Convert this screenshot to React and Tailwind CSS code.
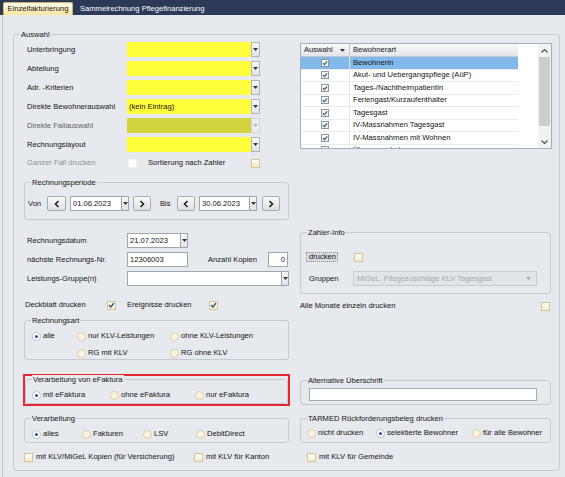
import React from "react";
import clsx from "clsx";

const Tri = ({ color = "#333" }) => (
  <svg width="5" height="3" viewBox="0 0 5 3">
    <path d="M0 0h5L2.5 3z" fill={color} />
  </svg>
);

const Group = ({ title, className, children }) => (
  <div className={clsx("relative rounded-[3px] border border-[#c5cad2]", className)}>
    <span className="absolute -top-[5px] left-[6px] bg-[#e6e9ee] px-[1px] leading-[9px]">
      {title}
    </span>
    {children}
  </div>
);

const Combo = ({ className, fill = "bg-white", value, disabled }) => (
  <div className={clsx("flex h-[15px]", className)}>
    <div className={clsx("flex flex-1 items-center px-[2px]", fill)}>{value}</div>
    <div
      className={clsx(
        "flex w-[9px] items-center justify-center border",
        disabled
          ? "border-[#d0d3d8] bg-[#eceef1]"
          : "border-[#b1b6be] bg-linear-to-b from-[#f7f8f9] to-[#e1e3e7]"
      )}
    >
      <Tri color={disabled ? "#b5b8bd" : "#333"} />
    </div>
  </div>
);

const DateCombo = ({ className, value }) => (
  <div className={clsx("flex h-[15px]", className)}>
    <div className="flex flex-1 items-center border border-r-0 border-[#a0a6ae] bg-white px-[2px]">
      {value}
    </div>
    <div className="flex w-[8px] items-center justify-center border border-[#a0a6ae] bg-linear-to-b from-[#f7f8f9] to-[#e1e3e7]">
      <Tri />
    </div>
  </div>
);

const Input = ({ className, children }) => (
  <div className={clsx("flex h-[15px] items-center border border-[#a0a6ae] bg-white px-[2px]", className)}>
    {children}
  </div>
);

const NavBtn = ({ className, right }) => (
  <div
    className={clsx(
      "flex h-[15px] items-center justify-center rounded-[2px] border border-[#a6abb3] bg-linear-to-b from-[#fbfbfb] to-[#dcdfe3]",
      className
    )}
  >
    <svg width="6" height="8" viewBox="0 0 6 8">
      <path
        d={right ? "M1.5 1l3 3-3 3" : "M4.5 1l-3 3 3 3"}
        fill="none"
        stroke="#1e1e1e"
        strokeWidth="1.6"
      />
    </svg>
  </div>
);

const CheckMark = ({ color = "#2a4d8f" }) => (
  <svg width="7" height="6" viewBox="0 0 7 6">
    <path d="M1 3l1.8 2L6 1" fill="none" stroke={color} strokeWidth="1.3" />
  </svg>
);

const Check = ({ checked }) => (
  <div className="flex h-[9px] w-[9px] shrink-0 items-center justify-center border border-[#dcc58d] bg-linear-to-b from-[#fefdf8] to-[#f3ebd2]">
    {checked && <CheckMark />}
  </div>
);

const Radio = ({ checked, label, className }) => (
  <div className={clsx("flex items-center", className)}>
    <div
      className={clsx(
        "flex h-[9px] w-[9px] shrink-0 items-center justify-center rounded-full border",
        checked ? "border-[#b9c1cc] bg-white" : "border-[#dfce96] bg-[#f8f3e2]"
      )}
    >
      {checked && <div className="h-[3px] w-[3px] rounded-full bg-[#1f4e9c]" />}
    </div>
    <span className="ml-[2px]">{label}</span>
  </div>
);

const yellowRows = [
  { label: "Unterbringung" },
  { label: "Abteilung" },
  { label: "Adr. -Kriterien" },
  { label: "Direkte Bewohnerauswahl", value: "(kein Eintrag)" },
  { label: "Direkte Fallauswahl", disabled: true },
  { label: "Rechnungslayout" },
];

const bewohnerarten = [
  "BewohnerIn",
  "Akut- und Uebergangspflege (AüP)",
  "Tages-/NachtheimpatientIn",
  "Feriengast/Kurzaufenthalter",
  "Tagesgast",
  "IV-Massnahmen Tagesgast",
  "IV-Massnahmen mit Wohnen",
  "Übergangsbetreuung",
];

const LeftColumn = () => (
  <div className="flex w-[286px] flex-col">
    <div className="mt-[7px] flex flex-col gap-[4px]">
      {yellowRows.map((r) => (
        <div key={r.label} className="flex h-[15px] items-center">
          <span className={clsx("w-[113px] pl-[13px]", r.disabled && "text-[#5c6068]")}>
            {r.label}
          </span>
          <Combo
            className="w-[133px]"
            fill={r.disabled ? "bg-[#d3d43d]" : "bg-[#ffff3b]"}
            value={r.value}
            disabled={r.disabled}
          />
        </div>
      ))}
    </div>

    <div className="mt-[6px] flex h-[10px] items-center">
      <span className="w-[114px] pl-[13px] text-[#8d929a]">Ganzer Fall drucken</span>
      <div className="h-[9px] w-[9px] border border-[#f1f2f4] bg-white" />
      <span className="ml-[11px] w-[103px]">Sortierung nach Zahler</span>
      <Check />
    </div>

    <Group title="Rechnungsperiode" className="ml-[10px] mt-[14px] h-[38px] w-[265px]">
      <div className="flex items-center pl-[3px] pt-[13px]">
        <span className="w-[19px]">Von</span>
        <NavBtn className="w-[19px]" />
        <DateCombo className="ml-[4px] w-[59px]" value="01.06.2023" />
        <NavBtn className="ml-[4px] w-[18px]" right />
        <span className="ml-[9px] w-[17px]">Bis</span>
        <NavBtn className="w-[18px]" />
        <DateCombo className="ml-[4px] w-[58px]" value="30.06.2023" />
        <NavBtn className="ml-[5px] w-[18px]" right />
      </div>
    </Group>

    <div className="mt-[13px] flex flex-col gap-[4px]">
      <div className="flex h-[15px] items-center">
        <span className="w-[113px] pl-[13px]">Rechnungsdatum</span>
        <DateCombo className="w-[61px]" value="21.07.2023" />
      </div>
      <div className="flex h-[15px] items-center">
        <span className="w-[113px] pl-[13px]">nächste Rechnungs-Nr.</span>
        <Input className="w-[61px]">12306003</Input>
        <span className="ml-[20px] w-[60px]">Anzahl Kopien</span>
        <Input className="w-[20px] justify-end">0</Input>
      </div>
      <div className="flex h-[15px] items-center">
        <span className="w-[113px] pl-[13px]">Leistungs-Gruppe(n)</span>
        <div className="flex h-[15px] w-[162px]">
          <div className="flex-1 border border-r-0 border-[#a0a6ae] bg-white" />
          <div className="flex w-[8px] items-center justify-center border border-[#a0a6ae] bg-linear-to-b from-[#f7f8f9] to-[#e1e3e7]">
            <Tri />
          </div>
        </div>
      </div>
    </div>

    <div className="mt-[14px] flex h-[10px] items-center pl-[11px]">
      <span className="w-[82px]">Deckblatt drucken</span>
      <Check checked />
      <span className="ml-[11px] w-[82px]">Ereignisse drucken</span>
      <Check checked />
    </div>

    <Group title="Rechnungsart" className="ml-[10px] mt-[10px] h-[40px] w-[265px]">
      <div className="pl-[7px] pt-[10px]">
        <div className="flex h-[10px] items-center">
          <Radio className="w-[45px]" checked label="alle" />
          <Radio className="w-[93px]" label="nur KLV-Leistungen" />
          <Radio label="ohne KLV-Leistungen" />
        </div>
        <div className="mt-[7px] flex h-[10px] items-center pl-[45px]">
          <Radio className="w-[93px]" label="RG mit KLV" />
          <Radio label="RG ohne KLV" />
        </div>
      </div>
    </Group>

    <div className="ml-[9px] mt-[14px] h-[32px] w-[267px] border-2 border-[#e8282d]">
      <Group title="Verarbeitung von eFaktura" className="mt-[3px] h-[25px] w-[263px]">
        <div className="mt-[10px] flex h-[10px] items-center pl-[6px]">
          <Radio className="w-[78px]" checked label="mit eFaktura" />
          <Radio className="w-[85px]" label="ohne eFaktura" />
          <Radio label="nur eFaktura" />
        </div>
      </Group>
    </div>

    <Group title="Verarbeitung" className="ml-[10px] mt-[12px] h-[25px] w-[265px]">
      <div className="mt-[10px] flex h-[10px] items-center pl-[7px]">
        <Radio className="w-[50px]" checked label="alles" />
        <Radio className="w-[61px]" label="Fakturen" />
        <Radio className="w-[53px]" label="LSV" />
        <Radio label="DebitDirect" />
      </div>
    </Group>
  </div>
);

const Chevron = ({ down }) => (
  <svg width="7" height="4" viewBox="0 0 7 4">
    <path
      d={down ? "M0.5 0.5L3.5 3.5L6.5 0.5" : "M0.5 3.5L3.5 0.5L6.5 3.5"}
      fill="none"
      stroke="#555"
      strokeWidth="1.2"
    />
  </svg>
);

const RightColumn = () => (
  <div className="flex w-[252px] flex-col">
    <div className="mt-[8px] flex h-[106px] w-[252px] overflow-hidden border border-[#a7adb6] bg-white">
      <div className="w-[217px]">
        <div className="flex h-[13px] border-b border-[#c3c7ce] bg-linear-to-b from-[#fafafa] to-[#e2e4e8]">
          <div className="flex w-[49px] items-center border-r border-[#c3c7ce] pl-[3px]">
            Auswahl
            <span className="ml-[7px] flex">
              <Tri />
            </span>
          </div>
          <div className="flex items-center pl-[3px]">Bewohnerart</div>
        </div>
        {bewohnerarten.map((b, i) => (
          <div
            key={b}
            className={clsx(
              "flex h-[12.5px] border-b border-[#ebebeb]",
              i === 0 && "bg-[#80b9ea]"
            )}
          >
            <div className="flex w-[49px] items-center justify-center border-r border-[#e4e4e4]">
              <div className="flex h-[8px] w-[8px] items-center justify-center border border-[#8d95a1] bg-linear-to-b from-[#fdfdfd] to-[#e8eaee]">
                <CheckMark color="#3d5575" />
              </div>
            </div>
            <div className="flex items-center pl-[3px]">{b}</div>
          </div>
        ))}
      </div>
      <div className="w-[20px]" />
      <div className="flex w-[13px] flex-col bg-[#f2f2f2]">
        <div className="flex h-[13px] items-center justify-center">
          <Chevron />
        </div>
        <div className="mx-[1px] h-[69px] bg-[#cdcdcd]" />
        <div className="flex-1" />
        <div className="flex h-[13px] items-center justify-center">
          <Chevron down />
        </div>
      </div>
    </div>

    <Group title="Zahler-Info" className="mt-[83px] h-[62px] w-[251px]">
      <div className="mt-[19px] flex h-[10px] items-center pl-[5px]">
        <div className="flex h-[10px] w-[32px] items-center border border-dotted border-[#8f949c] bg-[#d9dbe0] pl-[2px]">
          drucken
        </div>
        <div className="ml-[16px]">
          <Check />
        </div>
      </div>
      <div className="mt-[9px] flex h-[15px] items-center pl-[8px]">
        <span className="w-[44px]">Gruppen</span>
        <div className="flex h-[15px] w-[184px] items-center justify-between border border-[#c6cad1] bg-[#e1e4e9] pl-[3px] pr-[5px] text-[#a4a9b1]">
          MiGeL, Pflegezuschläge KLV Tagesgast
          <Tri color="#a8adb5" />
        </div>
      </div>
    </Group>

    <div className="mt-[7px] flex h-[10px] w-[251px] items-center justify-between pr-[1px]">
      <span>Alle Monate einzeln drucken</span>
      <Check />
    </div>

    <Group title="Alternative Überschrift" className="mt-[69px] h-[25px] w-[251px]">
      <div className="pl-[8px] pt-[7px]">
        <div className="h-[13px] w-[228px] border border-[#a5abb4] bg-white" />
      </div>
    </Group>

    <Group title="TARMED Rückforderungsbeleg drucken" className="mt-[13px] h-[25px] w-[251px]">
      <div className="mt-[9px] flex h-[10px] items-center pl-[6px]">
        <Radio className="w-[69px]" label="nicht drucken" />
        <Radio className="w-[96px]" checked label="selektierte Bewohner" />
        <Radio label="für alle Bewohner" />
      </div>
    </Group>
  </div>
);

export default function App() {
  return (
    <div className="h-[477px] w-[565px] overflow-hidden bg-[#e6e9ee] font-['Liberation_Sans',Arial,sans-serif] text-[7.6px] leading-none text-[#141414]">
      <div className="flex h-[15px] items-end bg-[#2c3a58] pl-[3px]">
        <div className="flex h-[13px] w-[70px] items-center justify-center rounded-t-[2px] border border-b-0 border-[#cdb56e] bg-linear-to-b from-[#fffbe9] to-[#fae5a0]">
          Einzelfakturierung
        </div>
        <div className="ml-[7px] flex h-[13px] items-center text-white">
          Sammelrechnung Pflegefinanzierung
        </div>
      </div>

      <div className="ml-[2px] h-[462px] border-l border-[#bcc1c9] pl-[10px] pt-[19px]">
        <Group title="Auswahl" className="h-[437px] w-[547px]">
          <div className="flex h-[408px]">
            <LeftColumn />
            <RightColumn />
          </div>
          <div className="mt-[9px] flex h-[10px] items-center pl-[10px]">
            <div className="flex w-[170px] items-center">
              <Check />
              <span className="ml-[3px]">mit KLV/MiGeL Kopien (für Versicherung)</span>
            </div>
            <div className="flex w-[113px] items-center">
              <Check />
              <span className="ml-[3px]">mit KLV für Kanton</span>
            </div>
            <div className="flex items-center">
              <Check />
              <span className="ml-[3px]">mit KLV für Gemeinde</span>
            </div>
          </div>
        </Group>
      </div>
    </div>
  );
}
